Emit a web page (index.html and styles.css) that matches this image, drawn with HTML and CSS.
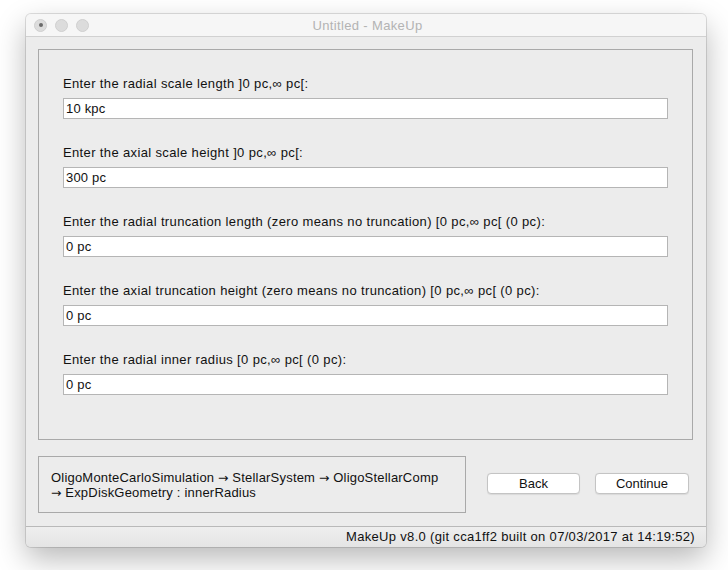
FILE: index.html
```html
<!DOCTYPE html>
<html>
<head>
<meta charset="utf-8">
<title>Untitled - MakeUp</title>
<link rel="stylesheet" href="styles.css">
</head>
<body>
<div class="window">
  <div class="titlebar">
    <div class="lights">
      <span class="light close"></span>
      <span class="light"></span>
      <span class="light"></span>
    </div>
    <div class="title">Untitled - MakeUp</div>
  </div>
  <div class="content">
    <div class="panel">
      <div class="field">
        <div class="label">Enter the radial scale length ]0 pc,∞ pc[:</div>
        <div class="input">10 kpc</div>
      </div>
      <div class="field">
        <div class="label">Enter the axial scale height ]0 pc,∞ pc[:</div>
        <div class="input">300 pc</div>
      </div>
      <div class="field">
        <div class="label">Enter the radial truncation length (zero means no truncation) [0 pc,∞ pc[ (0 pc):</div>
        <div class="input">0 pc</div>
      </div>
      <div class="field">
        <div class="label">Enter the axial truncation height (zero means no truncation) [0 pc,∞ pc[ (0 pc):</div>
        <div class="input">0 pc</div>
      </div>
      <div class="field">
        <div class="label">Enter the radial inner radius [0 pc,∞ pc[ (0 pc):</div>
        <div class="input">0 pc</div>
      </div>
    </div>
    <div class="bottom">
      <div class="crumbs">OligoMonteCarloSimulation <span class="arrow">→</span> StellarSystem <span class="arrow">→</span> OligoStellarComp<br><span class="arrow">→</span> ExpDiskGeometry : innerRadius</div>
      <div class="buttons">
        <button class="btn">Back</button>
        <button class="btn">Continue</button>
      </div>
    </div>
  </div>
  <div class="status">MakeUp v8.0 (git cca1ff2 built on 07/03/2017 at 14:19:52)</div>
</div>
</body>
</html>
```

FILE: styles.css
```css
html, body {
  margin: 0;
  padding: 0;
  background: #ffffff;
}
body {
  width: 728px;
  height: 570px;
  overflow: hidden;
  font-family: "Liberation Sans", Arial, sans-serif;
  font-size: 13px;
  color: #111111;
}
.window {
  margin: 14px 0 0 26px;
  width: 680px;
  height: 533px;
  box-sizing: border-box;
  border-radius: 5px;
  background: #ececec;
  box-shadow: 0 0 0 1px rgba(0,0,0,0.12), 0 12px 30px rgba(0,0,0,0.28);
  display: flex;
  flex-direction: column;
  overflow: hidden;
}
.titlebar {
  height: 22px;
  flex: none;
  background: #f6f6f6;
  border-bottom: 1px solid #d1d1d1;
  display: flex;
  align-items: center;
}
.lights {
  display: flex;
  gap: 8px;
  padding-left: 8px;
}
.light {
  width: 11px;
  height: 11px;
  border-radius: 50%;
  background: #dcdcdc;
  border: 0.5px solid #cfcfcf;
  display: flex;
  align-items: center;
  justify-content: center;
}
.light.close::after {
  content: "";
  width: 4px;
  height: 4px;
  border-radius: 50%;
  background: #6a6a6a;
}
.title {
  flex: 1;
  text-align: center;
  color: #b3b3b3;
  font-size: 13px;
  letter-spacing: 0.35px;
  margin-right: 60px;
}
.content {
  flex: 1;
  display: flex;
  flex-direction: column;
  padding: 12px 13px 13px 12px;
  gap: 16px;
}
.panel {
  flex: 1;
  border: 1px solid #a9a9a9;
  padding: 26px 24px 0 24px;
  display: flex;
  flex-direction: column;
  gap: 26px;
}
.field {
  display: flex;
  flex-direction: column;
  gap: 6px;
}
.label {
  height: 16px;
  line-height: 16px;
  letter-spacing: 0.36px;
  white-space: nowrap;
}
.input {
  height: 19px;
  line-height: 19px;
  background: #ffffff;
  border: 1px solid #b5b5b5;
  padding-left: 2px;
  letter-spacing: 0.2px;
}
.bottom {
  height: 57px;
  flex: none;
  display: flex;
  align-items: center;
}
.crumbs {
  box-sizing: border-box;
  width: 428px;
  height: 57px;
  border: 1px solid #a9a9a9;
  padding: 13px 12px 0 12px;
  line-height: 15px;
  letter-spacing: 0.2px;
  white-space: nowrap;
}
.arrow {
  font-family: "DejaVu Sans", sans-serif;
  font-size: 12.5px;
  letter-spacing: 0;
}
.buttons {
  display: flex;
  gap: 15px;
  margin-left: 21px;
  margin-top: -2px;
}
.btn {
  font-family: inherit;
  font-size: 13px;
  color: #111111;
  background: #ffffff;
  border: 1px solid #c4c4c4;
  border-radius: 4px;
  height: 21px;
  width: 93px;
  padding: 0;
  box-shadow: 0 0.5px 1px rgba(0,0,0,0.08);
}
.btn + .btn {
  width: 94px;
}
.status {
  height: 20px;
  flex: none;
  border-top: 1px solid #b9b9b9;
  background: linear-gradient(#eeeeee, #e4e4e4);
  text-align: right;
  padding-right: 11px;
  line-height: 20px;
  letter-spacing: 0.32px;
}
```
